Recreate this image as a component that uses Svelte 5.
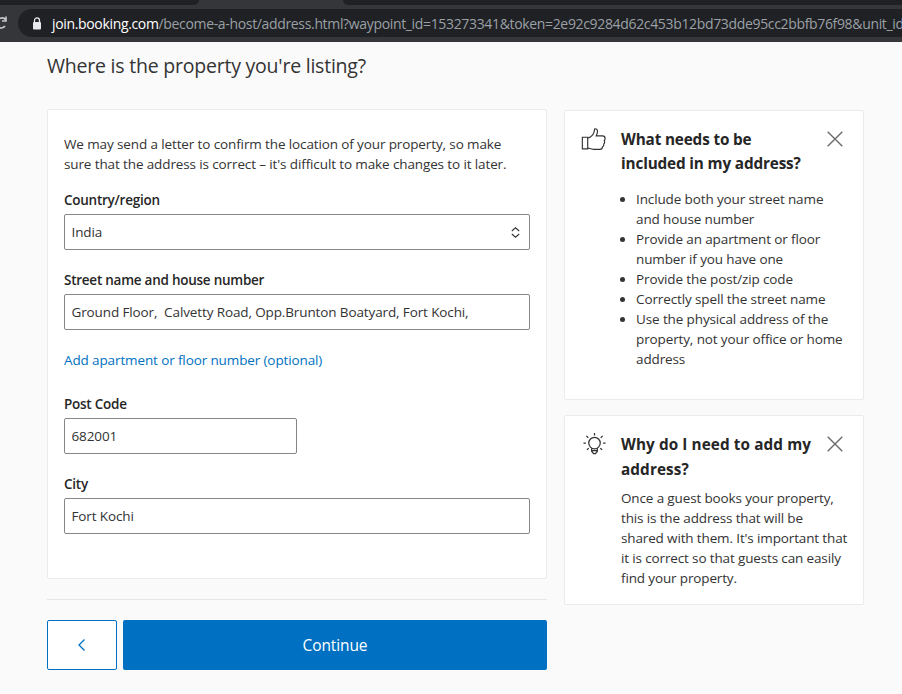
<script>
  const tips = [
    'Include both your street name and house number',
    'Provide an apartment or floor number if you have one',
    'Provide the post/zip code',
    'Correctly spell the street name',
    'Use the physical address of the property, not your office or home address'
  ];
</script>

<div class="chrome">
  <div class="tabs">
    <div class="tab left"></div>
    <div class="tab right"></div>
  </div>
  <div class="toolbar">
    <svg class="reload" width="8" height="16" viewBox="0 0 8 16"><path d="M-3 8a5 5 0 0 1 9-3M6 1.5V6H2M5 11a5 5 0 0 1-7 1" fill="none" stroke="#c8c9cb" stroke-width="1.6"/></svg>
    <div class="omnibox">
      <svg class="lock" width="10" height="13" viewBox="0 0 10 13"><path d="M2.5 5V3.4a2.5 2.5 0 0 1 5 0V5" fill="none" stroke="#e8eaed" stroke-width="1.3"/><rect x="1" y="5" width="8" height="7.4" rx="1" fill="#e8eaed"/></svg>
      <span class="host">join.booking.com</span><span class="path">/become-a-host/address.html?waypoint_id=153273341&amp;token=2e92c9284d62c453b12bd73dde95cc2bbfb76f98&amp;unit_id</span>
    </div>
  </div>
</div>

<main class="page">
  <h1>Where is the property you're listing?</h1>
  <div class="columns">
    <div class="left-col">
      <section class="card form">
        <p class="intro">We may send a letter to confirm the location of your property, so make sure that the address is correct – it's difficult to make changes to it later.</p>
        <div class="label first">Country/region</div>
        <div class="field select">
          <span>India</span>
          <svg width="9" height="11" viewBox="0 0 9 11"><path d="M.8 4L4.500.8 8.200 4M.8 7l3.700 3.200L8.200 7" fill="none" stroke="#333" stroke-width="1.100"/></svg>
        </div>
        <div class="label">Street name and house number</div>
        <div class="field">Ground Floor,&nbsp; Calvetty Road, Opp.Brunton Boatyard, Fort Kochi,</div>
        <div class="link">Add apartment or floor number (optional)</div>
        <div class="label post">Post Code</div>
        <div class="field short">682001</div>
        <div class="label">City</div>
        <div class="field">Fort Kochi</div>
      </section>
      <hr />
      <div class="actions">
        <button class="back" aria-label="Back">
          <svg width="9" height="14" viewBox="0 0 9 14"><path d="M7.500 1.500L2 7l5.500 5.500" fill="none" stroke="#0071c2" stroke-width="1.300"/></svg>
        </button>
        <button class="continue">Continue</button>
      </div>
    </div>

    <div class="side">
      <section class="card tip one">
        <svg class="icon" width="25" height="25" viewBox="0 0 28 26"><path d="M1.500 10.500h6v13h-6zM7.500 11.500c3-1 6-3.500 7-6.500.500-1.800.300-3.200 1-4 1.800-.400 3 1 3 3 0 2-1 3.500-1.500 5h7c1.800 0 3 1.200 3 3 0 1-.400 1.800-1 2.300.600.700.800 2.700-.500 3.700.300 1.500-.300 2.700-1.500 3.300 0 1.700-1 2.700-3 2.700h-7c-2.500 0-4-1-6-1.500" fill="none" stroke="#333" stroke-width="1.300"/></svg>
        <div class="tip-body">
          <h2>What needs to be included in my address?</h2>
          <ul>
            {#each tips as tip}
              <li>{tip}</li>
            {/each}
          </ul>
        </div>
        <svg class="close" width="16" height="16" viewBox="0 0 16 16"><path d="M.7.700l14.600 14.600M15.300.700L.7 15.300" stroke="#6b6b6b" stroke-width="1.400"/></svg>
      </section>
      <section class="card tip two">
        <svg class="icon bulb" width="23" height="24" viewBox="0 0 24 24"><g fill="none" stroke="#333" stroke-width="1.300"><circle cx="12" cy="11" r="6"/><path d="M9 16.500v3l2 2.500h2l2-2.500v-3M9 19h6"/><path d="M12 .5v2.500M3.500 3.500l2 2M20.500 3.500l-2 2M.5 11H3M21 11h2.500M4 18l2-1.500M20 18l-2-1.500"/></g></svg>
        <div class="tip-body">
          <h2>Why do I need to add my address?</h2>
          <p>Once a guest books your property, this is the address that will be<br />shared with them. It's important that it is correct so that guests can easily find your property.</p>
        </div>
        <svg class="close" width="16" height="16" viewBox="0 0 16 16"><path d="M.7.700l14.600 14.600M15.300.700L.7 15.300" stroke="#6b6b6b" stroke-width="1.400"/></svg>
      </section>
    </div>
  </div>
</main>

<style>
  :global(body) {
    margin: 0;
    background: #fafafa;
    overflow: hidden;
    font-family: "Open Sans", "Noto Sans", "Liberation Sans", sans-serif;
    color: #333;
  }
  .chrome { height: 42px; background: #35363a; overflow: hidden; }
  .tabs { height: 5px; display: flex; justify-content: space-between; }
  .tab { height: 5px; background: #202124; }
  .tab.left { width: 199px; border-bottom-right-radius: 6px; }
  .tab.right { width: 559px; border-bottom-left-radius: 6px; }
  .toolbar { display: flex; align-items: flex-start; height: 37px; }
  .reload { flex: none; width: 8px; margin: 10px 10px 0 0; }
  .omnibox {
    flex: 1;
    min-width: 0;
    height: 28px;
    margin-top: 4px;
    border-radius: 14px 0 0 14px;
    background: #202124;
    display: flex;
    align-items: center;
    overflow: hidden;
    white-space: nowrap;
    font-size: 14px;
    letter-spacing: -0.34px;
  }
  .lock { flex: none; margin: 0 10px 0 14px; }
  .host { color: #fff; }
  .path { color: #9aa0a6; }

  .page { padding: 0 0 0 47px; }
  h1 {
    margin: 0;
    padding-top: 11px;
    height: 56px;
    box-sizing: border-box;
    font-size: 19.500px;
    line-height: 26px;
    font-weight: 400;
    letter-spacing: -0.22px;
  }
  .columns {
    display: grid;
    grid-template-columns: 500px 300px;
    column-gap: 17px;
    padding-top: 11px;
    align-items: start;
  }
  .card {
    box-sizing: border-box;
    background: #fff;
    border: 1px solid #ebebeb;
    border-radius: 2px;
  }
  .form { height: 470px; padding: 24px 16px 0; }
  .intro, .label, .field, .link, li, .tip-body p {
    font-size: 13.500px;
    letter-spacing: -0.12px;
  }
  .intro { margin: 0; line-height: 20px; width: 455px; }
  .label { font-weight: 600; line-height: 20px; margin-top: 20px; color: #262626; letter-spacing: -0.25px; }
  .label.first { margin-top: 16px; }
  .label.post { margin-top: 24px; }
  .field {
    box-sizing: border-box;
    height: 36px;
    margin-top: 4px;
    padding: 0 6.500px;
    border: 1px solid #868686;
    border-radius: 2px;
    background: #fff;
    display: flex;
    align-items: center;
  }
  .field.select { justify-content: space-between; padding-right: 9px; }
  .field.short { width: 233px; }
  .link { color: #0071c2; line-height: 20px; margin-top: 20px; }

  hr { border: 0; border-top: 1px solid #e6e6e6; margin: 20px 0 20px; }
  .actions { display: flex; gap: 6px; }
  button { height: 50px; border-radius: 2px; font: inherit; padding: 0; }
  .back {
    width: 70px;
    flex: none;
    background: #fff;
    border: 1px solid #0071c2;
    display: flex;
    align-items: center;
    justify-content: center;
  }
  .back svg { margin-right: 2px; }
  .continue {
    flex: 1;
    background: #0071c2;
    border: 0;
    color: #fff;
    font-size: 15.500px;
    letter-spacing: -0.1px;
  }

  .side { display: flex; flex-direction: column; gap: 15px; padding-top: 1px; }
  .tip { position: relative; display: flex; padding: 16px 16px 0 16px; }
  .tip.one { height: 290px; }
  .tip.two { height: 190px; }
  .icon { flex: none; margin-right: 15px; }
  .bulb { margin: 0 15px 0 2px; }
  .tip-body { flex: 1; min-width: 0; }
  h2 {
    margin: 0;
    font-size: 15.300px;
    line-height: 24px;
    font-weight: 700;
    letter-spacing: -0.15px;
    color: #262626;
    width: 190px;
  }
  .tip.two h2 { line-height: 25px; width: 196px; letter-spacing: 0.1px; }
  .close { position: absolute; top: 20px; right: 20px; }
  ul { margin: 14px 0 0; padding: 0 0 0 15px; }
  li { line-height: 20px; }
  .tip-body p { margin: 6px -5px 0 0; line-height: 20px; letter-spacing: -0.14px; }
</style>
